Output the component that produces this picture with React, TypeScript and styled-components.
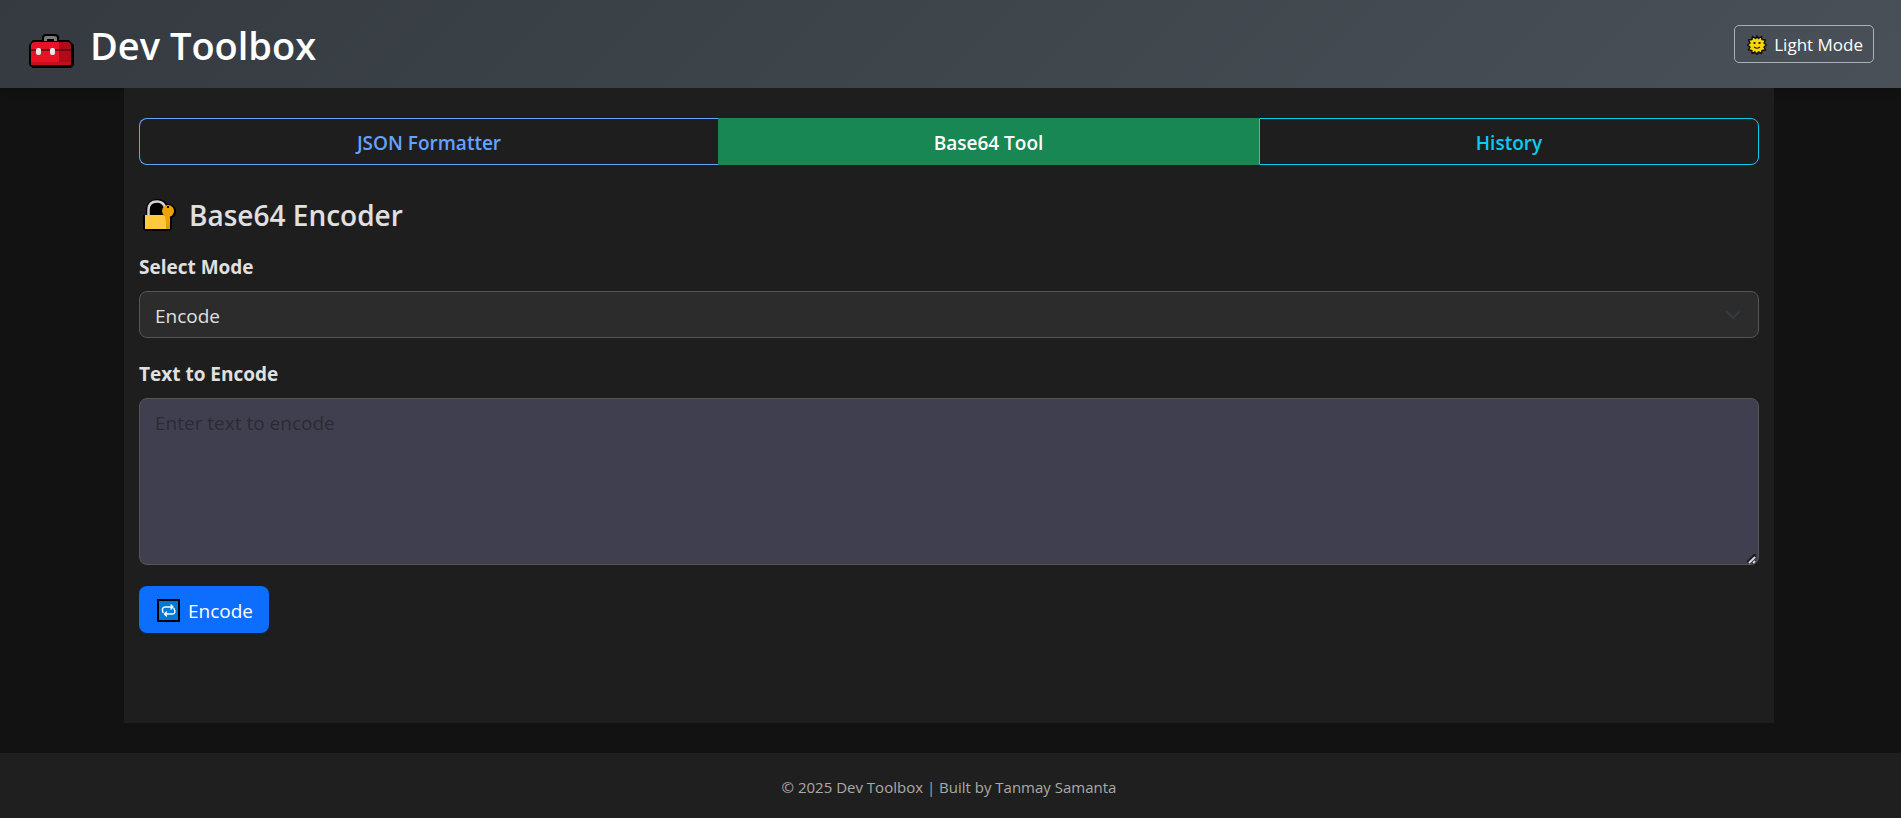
import React, { useState } from "react";
import styled, { createGlobalStyle, css } from "styled-components";

const GlobalStyle = createGlobalStyle`
  *, *::before, *::after { box-sizing: border-box; }
  body {
    margin: 0;
    background: #121212;
    color: #e0e0e0;
    font-family: "Segoe UI", "Open Sans", "Noto Sans", sans-serif;
    font-size: 19px;
    line-height: 30px;
  }
  #root { min-height: 100vh; display: flex; flex-direction: column; }
  button, select, textarea { font: inherit; }
`;

const Header = styled.header`
  display: flex;
  align-items: center;
  justify-content: space-between;
  height: 88px;
  padding: 0 27px 0 28px;
  background: linear-gradient(135deg, #343a40, #495057);
  box-shadow: 0 2px 8px rgba(0, 0, 0, 0.2);
`;

const Brand = styled.h1`
  display: flex;
  align-items: center;
  gap: 15px;
  margin: 0;
  padding-top: 2px;
  color: #fff;
  font-size: 38px;
  font-weight: 600;
  line-height: 48px;

  svg { margin-top: 12px; }
`;

const ModeButton = styled.button`
  display: flex;
  align-items: center;
  gap: 7px;
  height: 38px;
  padding: 2px 10px 0 12px;
  border: 1px solid #adb0b4;
  border-radius: 5px;
  background: transparent;
  color: #fff;
  font-size: 17px;
`;

const Content = styled.div`
  flex: 1;
  display: flex;
  padding: 0 27px 30px 24px;
`;

const Panel = styled.main`
  width: 100%;
  max-width: 1650px;
  margin: 0 auto;
  padding: 30px 15px;
  background: #1e1e1e;
`;

const Tabs = styled.nav`
  display: flex;
  margin-bottom: 30px;
`;

const Tab = styled.button<{ $tone: string; $share: number; $active?: boolean }>`
  flex: ${(p) => p.$share} 1 0;
  height: 47px;
  padding: 2px 0 0;
  border: 1px solid ${(p) => p.$tone};
  background: ${(p) => (p.$active ? p.$tone : "transparent")};
  color: ${(p) => (p.$active ? "#fff" : p.$tone)};
  font-weight: 600;

  &:first-child { border-radius: 8px 0 0 8px; border-right: 0; }
  &:last-child { border-radius: 0 8px 8px 0; }
`;

const Title = styled.h2`
  display: flex;
  align-items: center;
  gap: 12px;
  margin: 0 0 17px;
  padding-left: 4px;
  font-size: 28px;
  font-weight: 600;
  line-height: 40px;
`;

const Field = styled.div`
  display: flex;
  flex-direction: column;
  margin-bottom: 21px;
`;

const Label = styled.label`
  margin-bottom: 9px;
  font-weight: 700;
`;

const control = css`
  width: 100%;
  border: 1px solid #555;
  border-radius: 8px;
`;

const SelectBox = styled.div`
  display: grid;
  align-items: center;

  select, svg { grid-area: 1 / 1; }
  svg { justify-self: end; margin-right: 18px; pointer-events: none; }
`;

const Select = styled.select`
  ${control}
  appearance: none;
  height: 47px;
  padding: 2px 45px 0 15px;
  background: #2c2c2c;
  color: #e0e0e0;
`;

const TextBox = styled.div`
  display: grid;

  textarea, svg { grid-area: 1 / 1; }
  svg { place-self: end; margin: 0 2px 1px 0; pointer-events: none; }
`;

const TextArea = styled.textarea`
  ${control}
  display: block;
  height: 167px;
  padding: 9px 15px;
  background: #403f50;
  color: #e0e0e0;
  resize: vertical;

  &::placeholder { color: #2b2b35; opacity: 1; }
  &::-webkit-resizer { background: transparent; }
`;

const SubmitButton = styled.button`
  display: flex;
  align-items: center;
  gap: 8px;
  height: 47px;
  padding: 2px 16px 0 18px;
  border: 0;
  border-radius: 8px;
  background: #0d6efd;
  color: #fff;
`;

const Footer = styled.footer`
  padding: 21px 23px 18px 20px;
  background: #1f1f1f;
  color: #aaa;
  font-size: 15px;
  line-height: 26px;
  text-align: center;
`;

const ToolboxIcon = () => (
  <svg width="47" height="36" viewBox="0 0 47 36" aria-hidden="true">
    <path d="M14 7V4.500Q14 1 18 1H27Q31 1 31 4.500V7H41L46 12V32L43 35H5L1 32V12L5 7Z" fill="#000" />
    <path d="M16 8V5Q16 3 18 3H26Q29 3 29 5V8H26V6H19V8Z" fill="#7b7b7b" />
    <path d="M3 13Q3 9 7 9H31V31H3Z" fill="#e81224" />
    <path d="M31 9H39Q43 9 43 13V31H31Z" fill="#ad0c18" />
    <path d="M3 16H43V18H3Z" fill="#4a1015" opacity=".7" />
    <path d="M3 29H43V32H3Z" fill="#c50d1b" />
    <rect x="8" y="15" width="5" height="7" rx="2" fill="#e8e8ea" />
    <rect x="22" y="15" width="5" height="7" rx="2" fill="#e8e8ea" />
  </svg>
);

const SunIcon = () => (
  <svg width="20" height="20" viewBox="0 0 20 20" aria-hidden="true">
    <path
      d="M10 1L11.500 3.500L14.500 1.500L15 4.500L18.500 5L17 8L19.500 10L17 12L18.500 15L15 15.500L14.500 18.500L11.500 17L10 19.500L8 17L5 18.500L4.800 15.400L1.500 15L3 12L.5 10L3 8L1.500 5L5 4.500L5.500 1.500L8.500 3.500Z"
      fill="#fcd800" stroke="#111" strokeWidth="1.500" strokeLinejoin="round"
    />
    <rect x="6.500" y="7" width="2" height="2" fill="#222" />
    <rect x="11.500" y="7" width="2" height="2" fill="#222" />
    <path d="M7 12Q10 14.500 13 12" fill="none" stroke="#222" strokeWidth="1.200" />
  </svg>
);

const LockIcon = () => (
  <svg width="34" height="34" viewBox="0 0 34 34" aria-hidden="true">
    <path d="M3 17V11Q4 1 14 1Q21 1 24 6Q33 6 33 14Q33 18 29 20V31L27 33H3L0 31V17Z" fill="#000" />
    <path d="M5.500 18V12Q5.500 3.500 14 3.500Q20 3.500 22 9" fill="none" stroke="#d2d2d2" strokeWidth="2.500" />
    <rect x="2" y="17" width="25" height="14" fill="#ffc83d" />
    <rect x="23" y="17" width="4" height="14" fill="#e19b00" />
    <circle cx="25" cy="13" r="6" fill="#eda200" />
    <path d="M22 17H27V25L25 28L23 26Z" fill="#eda200" />
    <rect x="24" y="8" width="2" height="2" fill="#111" />
  </svg>
);

const RepeatIcon = () => (
  <svg width="23" height="23" viewBox="0 0 23 23" aria-hidden="true">
    <rect x="1" y="1" width="21" height="21" fill="#0078d7" stroke="#000" strokeWidth="2" />
    <g fill="none" stroke="#fff" strokeWidth="1.400" strokeLinecap="round" strokeLinejoin="round">
      <path d="M6 13.500Q4 8 8.500 8H15M14 6L16 8L14 10" />
      <path d="M17 9.500Q19.500 15 15 15H8M9.500 13L7.500 15L9.500 17" />
    </g>
  </svg>
);

const ChevronIcon = () => (
  <svg width="16" height="10" viewBox="0 0 16 10" fill="none" stroke="#343a40" strokeWidth="2" strokeLinecap="round" strokeLinejoin="round" aria-hidden="true">
    <path d="M2 2L8 8L14 2" />
  </svg>
);

const GripIcon = () => (
  <svg width="10" height="10" viewBox="0 0 10 10" aria-hidden="true">
    <path d="M0 8L8 0V2L2 9M5 9L8 6" fill="none" stroke="#15151c" strokeWidth="1.500" />
    <path d="M2 9L8 3M6 9L8 7" fill="none" stroke="#d8d8dc" strokeWidth="1.800" />
  </svg>
);

export default function App() {
  const [mode, setMode] = useState("Encode");
  return (
    <>
      <GlobalStyle />
      <Header>
        <Brand><ToolboxIcon />Dev Toolbox</Brand>
        <ModeButton type="button"><SunIcon />Light Mode</ModeButton>
      </Header>
      <Content>
        <Panel>
          <Tabs>
            <Tab type="button" $tone="#66a3ff" $share={578}>JSON Formatter</Tab>
            <Tab type="button" $tone="#198754" $share={539} $active>Base64 Tool</Tab>
            <Tab type="button" $tone="#0dcaf0" $share={498}>History</Tab>
          </Tabs>
          <Title><LockIcon />Base64 {mode}r</Title>
          <Field>
            <Label htmlFor="mode">Select Mode</Label>
            <SelectBox>
              <Select id="mode" value={mode} onChange={(e) => setMode(e.target.value)}>
                <option>Encode</option>
                <option>Decode</option>
              </Select>
              <ChevronIcon />
            </SelectBox>
          </Field>
          <Field>
            <Label htmlFor="text">Text to {mode}</Label>
            <TextBox>
              <TextArea id="text" placeholder={`Enter text to ${mode.toLowerCase()}`} />
              <GripIcon />
            </TextBox>
          </Field>
          <SubmitButton type="button"><RepeatIcon />{mode}</SubmitButton>
        </Panel>
      </Content>
      <Footer>© 2025 Dev Toolbox | Built by Tanmay Samanta</Footer>
    </>
  );
}
